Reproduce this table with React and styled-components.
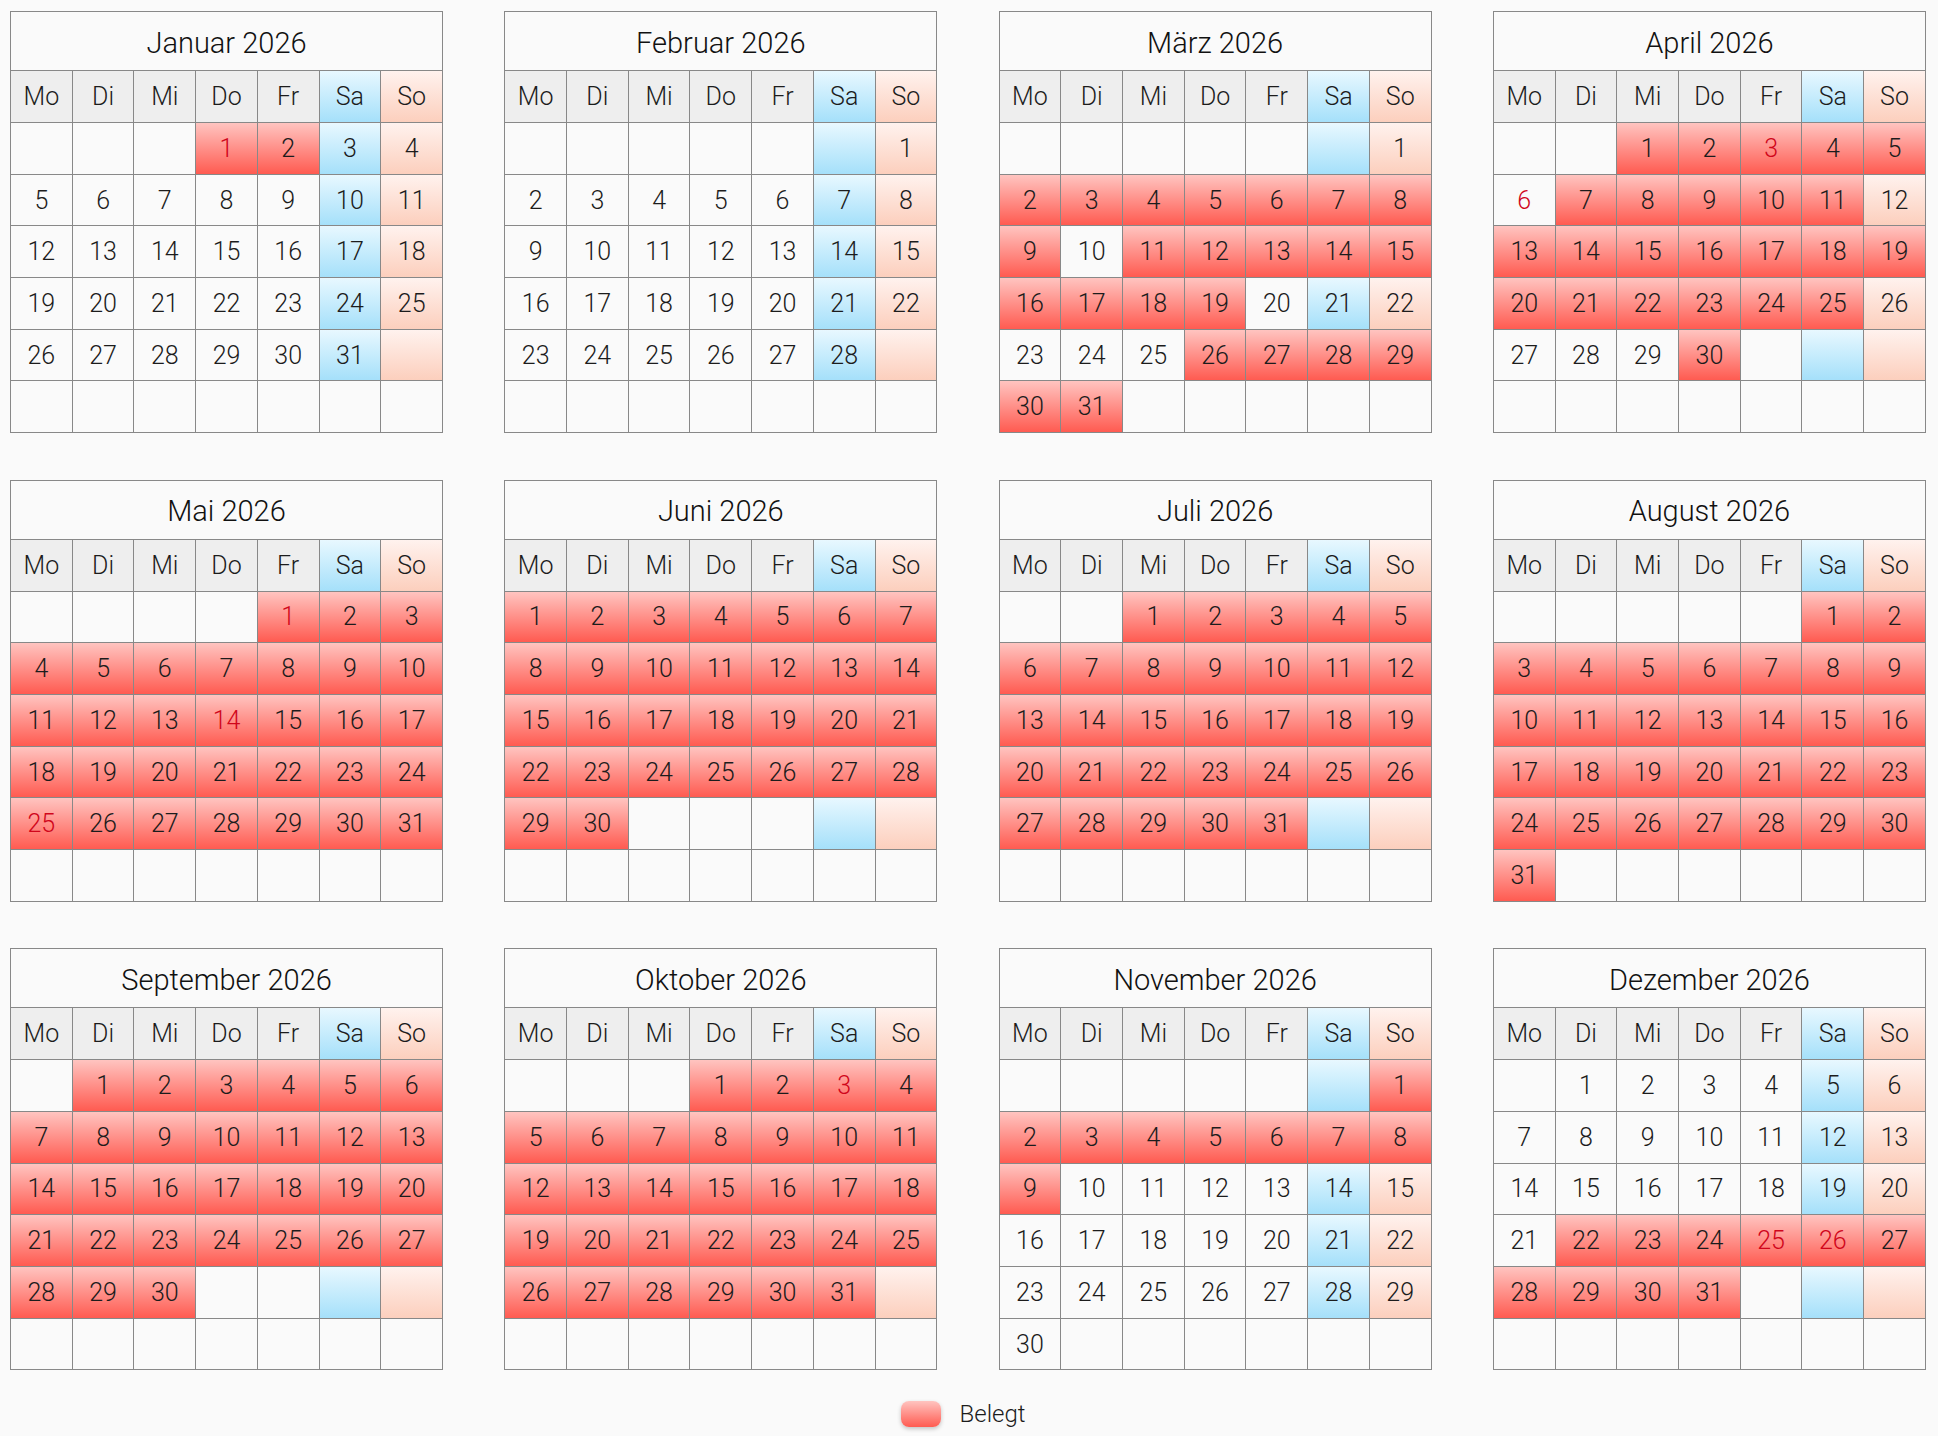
import React from "react";
import styled, { createGlobalStyle, css } from "styled-components";

const GlobalStyle = createGlobalStyle`
  html, body {
    margin: 0;
    padding: 0;
    background: #fafafa;
  }
  body {
    font-family: Roboto, "Helvetica Neue", "Liberation Sans", Arial, sans-serif;
    font-weight: 300;
    color: #1c1c1c;
  }
`;

const MONTHS = [
  "Januar", "Februar", "März", "April", "Mai", "Juni",
  "Juli", "August", "September", "Oktober", "November", "Dezember",
];
const WEEKDAYS = ["Mo", "Di", "Mi", "Do", "Fr", "Sa", "So"];
const YEAR = 2026;

const range = (a, b) => Array.from({ length: b - a + 1 }, (_, i) => a + i);

const BOOKED = {
  0: [1, 2],
  1: [],
  2: [...range(2, 9), ...range(11, 19), ...range(26, 31)],
  3: [...range(1, 5), ...range(7, 11), ...range(13, 25), 30],
  4: range(1, 31),
  5: range(1, 30),
  6: range(1, 31),
  7: range(1, 31),
  8: range(1, 30),
  9: range(1, 31),
  10: range(1, 9),
  11: range(22, 31),
};

const HOLIDAYS = {
  0: [1],
  3: [3, 6],
  4: [1, 14, 25],
  9: [3],
  11: [25, 26],
};

const GRADIENTS = {
  booked: "linear-gradient(to bottom, #ffc4c0 0%, #ff5b51 100%)",
  sat: "linear-gradient(to bottom, #e8f8ff 0%, #a5e0fa 100%)",
  sun: "linear-gradient(to bottom, #fff2ee 0%, #fccfbd 100%)",
  head: "#eeeeee",
  plain: "#fafafa",
};

const Page = styled.div`
  padding: 11px 0 0 10px;
  min-height: 1436px;
  box-sizing: border-box;
  display: flex;
  flex-direction: column;
`;

const YearGrid = styled.div`
  display: grid;
  grid-template-columns: repeat(4, 433px);
  column-gap: 61.3px;
  row-gap: 46.5px;
`;

const Calendar = styled.div`
  width: 433px;
  box-sizing: border-box;
  border-top: 1px solid #888;
  border-left: 1px solid #888;
  display: grid;
  grid-template-columns: repeat(7, 1fr);
  grid-template-rows: 59px 52px repeat(6, 51.7px);
`;

const Title = styled.div`
  grid-column: 1 / -1;
  box-sizing: border-box;
  border-right: 1px solid #888;
  border-bottom: 1px solid #888;
  background: #fafafa;
  display: flex;
  align-items: center;
  justify-content: center;
  padding-top: 3px;
  font-size: 29px;
  color: #111;
`;

const cellBase = css`
  box-sizing: border-box;
  border-right: 1px solid #888;
  border-bottom: 1px solid #888;
  display: flex;
  align-items: center;
  justify-content: center;
  font-size: 25px;
`;

const HeadCell = styled.div`
  ${cellBase};
  background: ${(p) => GRADIENTS[p.$kind]};
  color: #1c1c1c;
`;

const DayCell = styled.div`
  ${cellBase};
  background: ${(p) => GRADIENTS[p.$kind]};
  color: ${(p) => (p.$holiday ? "#d0061b" : "#1c1c1c")};
`;

const Legend = styled.div`
  display: flex;
  align-items: center;
  justify-content: center;
  gap: 19px;
  margin-top: 30px;
  padding-right: 22px;
`;

const Swatch = styled.span`
  display: block;
  width: 40px;
  height: 26px;
  border-radius: 8px;
  background: ${GRADIENTS.booked};
  box-shadow: 0 2px 4px rgba(0, 0, 0, 0.22);
`;

const LegendLabel = styled.span`
  font-size: 24px;
  color: #1c1c1c;
`;

function MonthCalendar({ month }) {
  const first = new Date(YEAR, month, 1).getDay();
  const offset = (first + 6) % 7;
  const days = new Date(YEAR, month + 1, 0).getDate();
  const booked = new Set(BOOKED[month] || []);
  const holidays = new Set(HOLIDAYS[month] || []);

  const cells = [];
  for (let i = 0; i < 42; i++) {
    const day = i - offset + 1;
    const valid = day >= 1 && day <= days;
    const col = i % 7;
    const row = Math.floor(i / 7);
    let kind = "plain";
    if (valid && booked.has(day)) kind = "booked";
    else if (row < 5 && col === 5) kind = "sat";
    else if (row < 5 && col === 6) kind = "sun";
    cells.push(
      <DayCell key={i} $kind={kind} $holiday={valid && holidays.has(day)}>
        {valid ? day : ""}
      </DayCell>
    );
  }

  return (
    <Calendar>
      <Title>
        {MONTHS[month]} {YEAR}
      </Title>
      {WEEKDAYS.map((w, i) => (
        <HeadCell key={w} $kind={i === 5 ? "sat" : i === 6 ? "sun" : "head"}>
          {w}
        </HeadCell>
      ))}
      {cells}
    </Calendar>
  );
}

export default function App() {
  return (
    <>
      <GlobalStyle />
      <Page>
        <YearGrid>
          {MONTHS.map((_, m) => (
            <MonthCalendar key={m} month={m} />
          ))}
        </YearGrid>
        <Legend>
          <Swatch />
          <LegendLabel>Belegt</LegendLabel>
        </Legend>
      </Page>
    </>
  );
}
